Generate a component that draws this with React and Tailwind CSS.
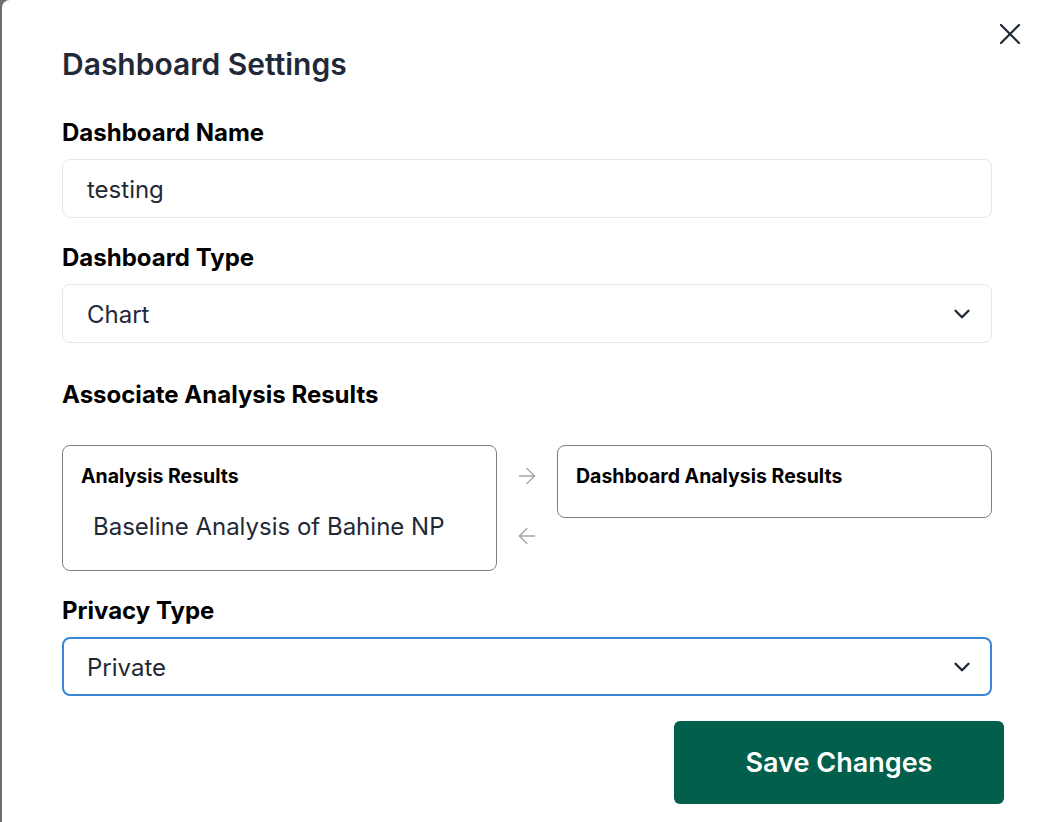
import React from "react";
import { ChevronDown, ArrowRight, ArrowLeft, X } from "lucide-react";

export default function App() {
  const font = { fontFamily: "Inter, 'Noto Sans', sans-serif" };
  return (
    <div className="w-[1050px] h-[822px] bg-[#6b7075] flex overflow-hidden" style={font}>
      <div className="relative ml-[2px] flex-1 bg-white rounded-tl-[8px] pl-[60px] pr-[58px] pt-[45px]">
        <button className="absolute right-[22px] top-[16px] text-[#1f2937]">
          <X size={36} strokeWidth={1.5} />
        </button>
        <h1 className="text-[30px] leading-[38px] font-semibold text-[#1f2937]">Dashboard Settings</h1>

        <div className="mt-[35px] text-[24px] leading-[30px] font-bold text-black">Dashboard Name</div>
        <div className="mt-[11px] h-[59px] rounded-[8px] border border-[#e3e8ef] flex items-center pl-[24px] pt-[2px] text-[24px] text-[#1f2937]">
          testing
        </div>

        <div className="mt-[25px] text-[24px] leading-[30px] font-bold text-black">Dashboard Type</div>
        <div className="mt-[11px] h-[59px] rounded-[8px] border border-[#e3e8ef] flex items-center justify-between pl-[24px] pr-[16px] text-[24px] text-[#1f2937]">
          <span className="pt-[2px]">Chart</span>
          <ChevronDown size={26} strokeWidth={2.2} className="text-[#1f2937]" />
        </div>

        <div className="mt-[37px] text-[24px] leading-[30px] font-bold text-black">Associate Analysis Results</div>

        <div className="mt-[35px] flex items-start">
          <div className="w-[435px] h-[126px] rounded-[8px] border border-[#7b7f85] pl-[18px] pt-[17px]">
            <div className="text-[19.5px] leading-[26px] font-bold text-black">Analysis Results</div>
            <div className="mt-[22px] pl-[12px] text-[24px] leading-[32px] text-[#1f2937]">Baseline Analysis of Bahine NP</div>
          </div>
          <div className="w-[60px] flex flex-col items-center pt-[18px] gap-[34px] text-[#a3a8b0]">
            <ArrowRight size={26} strokeWidth={1.3} />
            <ArrowLeft size={26} strokeWidth={1.3} />
          </div>
          <div className="w-[435px] h-[73px] rounded-[8px] border border-[#7b7f85] pl-[18px] pt-[17px]">
            <div className="text-[19.5px] leading-[26px] font-bold text-black">Dashboard Analysis Results</div>
          </div>
        </div>

        <div className="mt-[25px] text-[24px] leading-[30px] font-bold text-black">Privacy Type</div>
        <div className="mt-[11px] h-[59px] rounded-[8px] border-2 border-[#3a86d6] flex items-center justify-between pl-[23px] pr-[15px] text-[24px] text-[#1f2937]">
          <span className="pt-[2px]">Private</span>
          <ChevronDown size={26} strokeWidth={2.2} className="text-[#1f2937]" />
        </div>

        <div className="mt-[25px] -mr-[12px] flex justify-end">
          <button className="w-[330px] h-[83px] rounded-[6px] bg-[#025f4b] text-white text-[27px] font-semibold pt-[2px]">
            Save Changes
          </button>
        </div>
      </div>
    </div>
  );
}
